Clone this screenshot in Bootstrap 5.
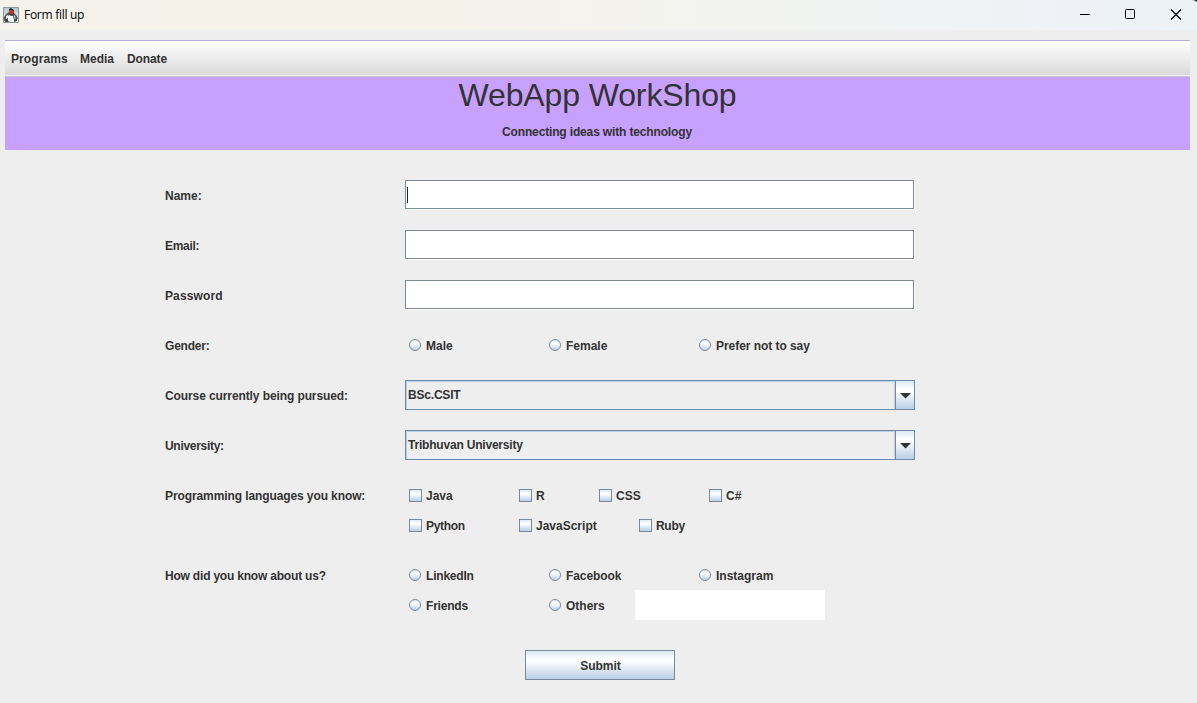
<!DOCTYPE html>
<html lang="en">
<head>
<meta charset="utf-8">
<title>Form fill up</title>
<link href="https://cdn.jsdelivr.net/npm/bootstrap@5.3.0/dist/css/bootstrap.min.css" rel="stylesheet">
<style>
html, body { height: 100%; overflow: hidden; }
body { background: #eee; color: #333; font: bold 12px/15px "Liberation Sans", Arial, sans-serif; }
.title-bar { height: 30px; background: linear-gradient(90deg, #f4f2ea 0%, #f5f2e9 35%, #f1f3f2 70%, #edf2f9 100%); font: 12px/15px "Open Sans", "Noto Sans", sans-serif; color: #000; }
.app-icon { margin-left: 3px; margin-top: -1px; }
.caption-text { margin-left: 5px; padding-bottom: 1px; letter-spacing: -.28px; }
.menu-strip { margin: 10px 7px 0 5px; height: 37px; padding-top: 1px; border-top: 1px solid #b8a8dc; border-bottom: 1px solid #ccc4d6; background: linear-gradient(#fff, #dadada 34px, #eee 34px); }
.menu-strip a { color: #333; text-decoration: none; }
.menu-strip a:nth-child(1) { margin-left: 6px; width: 69px; letter-spacing: .1px; }
.menu-strip a:nth-child(2) { width: 47px; }
.menu-strip a:nth-child(3) { letter-spacing: -.1px; }
.banner { margin: 0 7px 0 5px; height: 73px; background: #c8a0ff; }
.banner h1 { font-size: 32px; line-height: 36px; font-weight: 400; letter-spacing: -.12px; }
.banner p { padding: 12px 1px 0 0; letter-spacing: -.15px; }
.form-area { margin: 30px 0 0 165px; width: 750px; }
.line { height: 30px; margin-bottom: 20px; }
.line-tight { margin-bottom: 0; }
.line-label { width: 240px; flex: none; padding-top: 2px; }
.sp05 { letter-spacing: -.05px; } .sp10 { letter-spacing: -.1px; } .sp20 { letter-spacing: -.2px; } .sp30 { letter-spacing: -.3px; }
.spw { letter-spacing: .12px; }
.field { width: 509px; height: 29px; margin-bottom: 1px; padding: 0 3px; border: 1px solid #7a8a99; border-radius: 0; background: #fff; box-shadow: 1px 1px #fff; outline: 0; }
.field-active { background: linear-gradient(#222, #222) 1px 6px / 1px 16px no-repeat #fff; }
.combo { width: 510px; height: 30px; border: 1px solid #6f8aa6; box-shadow: inset 1px 1px #b8cfe5; }
.combo-value { padding: 1px 0 0 2px; }
.combo-arrow { width: 19px; border-left: 1px solid #7a8a99; box-shadow: -1px 0 #b8cfe5; }
.metal, .opt input { background: linear-gradient(#dde8f3 0%, #fff 30%, #fff 35%, #b8cfe5 100%); }
.opt { display: flex; align-items: center; gap: 4px; padding-left: 4px; white-space: nowrap; }
.opt span { padding-top: 2px; }
.opt input { appearance: none; flex: none; width: 13px; height: 13px; margin: 1px 0 0; border: 1px solid #7a8a99; }
.opt input[type=radio] { width: 12px; height: 12px; margin: 0 1px 0 0; border-radius: 50%; }
.w80 { width: 80px; } .w90 { width: 90px; } .w110 { width: 110px; } .w120 { width: 120px; } .w140 { width: 140px; } .w150 { width: 150px; }
.other-field { width: 190px; height: 30px; border: 0; background: #fff; }
.submit-btn, .submit-btn:hover { width: 150px; height: 30px; margin: 30px 0 0 360px; padding: 2px 0 0 1px; border: 1px solid #7a8a99; border-radius: 0; color: #333; font-size: 12px; line-height: 15px; font-weight: bold; }
</style>
</head>
<body>
<header class="title-bar d-flex align-items-center">
  <svg class="app-icon flex-shrink-0" width="16" height="16" viewBox="0 0 16 16">
    <defs><linearGradient id="g" x1="0" y1="0" x2="0" y2="1"><stop offset="0" stop-color="#b5c6d4"/><stop offset="1" stop-color="#f3f6f8"/></linearGradient></defs>
    <path fill="url(#g)" stroke="#8d979e" d="M.5.5h15v15H.5z"/>
    <path fill="#555a5e" d="M6 5l2-2 3 3 2 2 2 3-1 2-2-2-2 2H6l-2 0-3 0 0-3 2-3z"/>
    <path fill="#e8edf1" d="M3 9l2-1 1 2-3 2zM11 8l2 3-2-1z"/>
    <path fill="#fff" d="M6 8l2 1 2 0 1 5H5L5 11z"/>
    <path fill="#444" d="M1 13l4-1v2l2 1H2zM11 12l3 0v2l-3 1z"/>
    <path fill="#222" d="M6 2l2-1 3 2 0 4-3 1-2-2z"/>
    <path fill="#c53a30" d="M6 3l2 0 3 1-1 3-3 0-1-2z"/>
  </svg>
  <span class="caption-text">Form fill up</span>
  <svg class="ms-auto" width="117" height="30" viewBox="0 0 117 30" fill="none" stroke="#000">
    <path d="M0 14.500h10"/><rect x="45.500" y="9.500" width="9" height="9" rx="1"/><path d="M91 9.500l10 10M101 9.500l-10 10" stroke-width="1.100"/>
    <path fill="#222" stroke="none" d="M112 0h5v2q-2-2-5-2z"/>
  </svg>
</header>
<nav class="menu-strip d-flex align-items-center">
  <a href="#">Programs</a>
  <a href="#">Media</a>
  <a href="#">Donate</a>
</nav>
<div class="banner text-center">
  <h1 class="m-0">WebApp WorkShop</h1>
  <p class="mb-0">Connecting ideas with technology</p>
</div>
<form class="form-area">
  <div class="line d-flex align-items-center"><label class="line-label">Name:</label><input class="field field-active"></div>
  <div class="line d-flex align-items-center"><label class="line-label sp30">Email:</label><input class="field"></div>
  <div class="line d-flex align-items-center"><label class="line-label spw">Password</label><input type="password" class="field"></div>
  <div class="line d-flex align-items-center"><span class="line-label sp20">Gender:</span>
    <label class="opt w140"><input type="radio" name="gender"><span>Male</span></label>
    <label class="opt w150"><input type="radio" name="gender"><span>Female</span></label>
    <label class="opt"><input type="radio" name="gender"><span class="sp05">Prefer not to say</span></label>
  </div>
  <div class="line d-flex align-items-center"><span class="line-label sp10">Course currently being pursued:</span>
    <div class="combo d-flex align-items-stretch"><span class="combo-value sp20 flex-grow-1 align-self-center">BSc.CSIT</span><span class="combo-arrow metal"><svg class="d-block" width="18" height="28"><path fill="#333" d="M4 12h11l-5.500 5.500z"/></svg></span></div>
  </div>
  <div class="line d-flex align-items-center"><span class="line-label sp30">University:</span>
    <div class="combo d-flex align-items-stretch"><span class="combo-value sp20 flex-grow-1 align-self-center">Tribhuvan University</span><span class="combo-arrow metal"><svg class="d-block" width="18" height="28"><path fill="#333" d="M4 12h11l-5.500 5.500z"/></svg></span></div>
  </div>
  <div class="line line-tight d-flex align-items-center"><span class="line-label sp10">Programming languages you know:</span>
    <label class="opt w110"><input type="checkbox"><span>Java</span></label>
    <label class="opt w80"><input type="checkbox"><span>R</span></label>
    <label class="opt w110"><input type="checkbox"><span>CSS</span></label>
    <label class="opt"><input type="checkbox"><span>C#</span></label>
  </div>
  <div class="line d-flex align-items-center"><span class="line-label"></span>
    <label class="opt w110"><input type="checkbox"><span class="sp30">Python</span></label>
    <label class="opt w120"><input type="checkbox"><span>JavaScript</span></label>
    <label class="opt"><input type="checkbox"><span class="sp30">Ruby</span></label>
  </div>
  <div class="line line-tight d-flex align-items-center"><span class="line-label sp20">How did you know about us?</span>
    <label class="opt w140"><input type="radio" name="source"><span class="sp20">LinkedIn</span></label>
    <label class="opt w150"><input type="radio" name="source"><span class="sp10">Facebook</span></label>
    <label class="opt"><input type="radio" name="source"><span>Instagram</span></label>
  </div>
  <div class="line line-tight d-flex align-items-center"><span class="line-label"></span>
    <label class="opt w140"><input type="radio" name="source"><span class="sp20">Friends</span></label>
    <label class="opt w90"><input type="radio" name="source"><span>Others</span></label>
    <input class="other-field">
  </div>
  <button type="button" class="btn submit-btn metal d-block">Submit</button>
</form>
<script src="https://cdn.jsdelivr.net/npm/bootstrap@5.3.0/dist/js/bootstrap.bundle.min.js"></script>
</body>
</html>
